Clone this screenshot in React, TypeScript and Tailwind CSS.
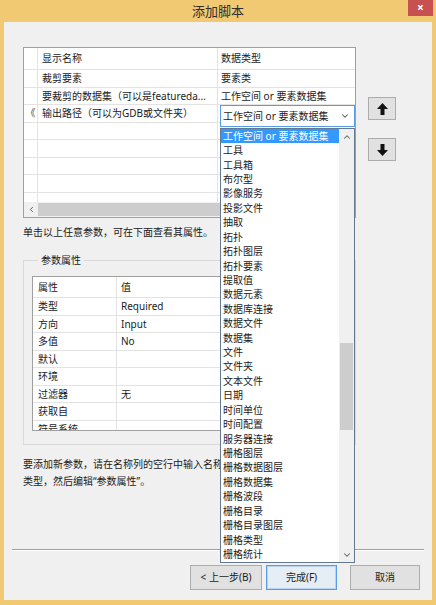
import { ChevronDown, ChevronLeft, ChevronUp } from "lucide-react";

const TYPES = [
  "工作空间 or 要素数据集",
  "工具",
  "工具箱",
  "布尔型",
  "影像服务",
  "投影文件",
  "抽取",
  "拓扑",
  "拓扑图层",
  "拓扑要素",
  "提取值",
  "数据元素",
  "数据库连接",
  "数据文件",
  "数据集",
  "文件",
  "文件夹",
  "文本文件",
  "日期",
  "时间单位",
  "时间配置",
  "服务器连接",
  "栅格图层",
  "栅格数据图层",
  "栅格数据集",
  "栅格波段",
  "栅格目录",
  "栅格目录图层",
  "栅格类型",
  "栅格统计",
];

const PARAMS = [
  { name: "裁剪要素", type: "要素类", mark: false },
  { name: "要裁剪的数据集（可以是featureda...", type: "工作空间 or 要素数据集", mark: false },
  { name: "输出路径（可以为GDB或文件夹）", type: "", mark: true },
];

const PROPS: [string, string][] = [
  ["类型", "Required"],
  ["方向", "Input"],
  ["多值", "No"],
  ["默认", ""],
  ["环境", ""],
  ["过滤器", "无"],
  ["获取自", ""],
  ["符号系统", ""],
];

export default function App() {
  return (
    <div className="relative flex h-[605px] w-[436px] flex-col bg-[#f1c972] font-['Noto_Sans','Noto_Sans_CJK_SC',sans-serif] text-[10px] text-[#1b1b1b]">
      {/* 标题栏 */}
      <div className="grid h-[22px] shrink-0 grid-cols-[1fr_auto_1fr] items-start">
        <div />
        <div className="pt-[2px] text-[13px] leading-[18px] text-[#2e2e2e]">添加脚本</div>
        <div className="flex justify-end pr-[3px]">
          <div className="flex h-[16px] w-[25px] items-center justify-center bg-[#c75050] text-[12px] font-bold leading-none text-white">
            ×
          </div>
        </div>
      </div>

      {/* 客户区 */}
      <div className="mx-[4px] mb-[5px] flex flex-1 flex-col bg-[#f0f0f0]">
        <div className="pl-[19px] pt-[25px]">
          <div className="flex">
            <ParamGrid />
            <div className="ml-[12px] flex flex-col gap-[18px] pt-[50px]">
              <ArrowButton dir="up" />
              <ArrowButton dir="down" />
            </div>
          </div>

          <div className="mt-[6px] h-[17px] leading-[17px]">单击以上任意参数，可在下面查看其属性。</div>

          <fieldset className="mt-[11px] w-[333px] border border-[#d9d9d9] pb-[13px] pl-[8px] pt-[7px]">
            <legend className="ml-[6px] px-[3px] leading-[17px]">参数属性</legend>
            <PropGrid />
          </fieldset>

          <div className="mt-[11px] whitespace-nowrap leading-[17px]">
            <div>要添加新参数，请在名称列的空行中输入名称，并在右侧选择数据</div>
            <div>类型，然后编辑“参数属性”。</div>
          </div>
        </div>

        <div className="mt-auto">
          <div className="mx-[8px] h-[2px] border-b border-t border-b-white border-t-[#a0a0a0]" />
          <div className="mt-[14px] flex justify-end pb-[10px] pr-[12px]">
            <button className="flex h-[25px] w-[72px] items-center justify-center border border-[#adadad] bg-[#e1e1e1]">
              &lt; 上一步(B)
            </button>
            <button className="ml-[4px] flex h-[25px] w-[71px] items-center justify-center border border-[#569de5] bg-[#e5edf5] shadow-[inset_0_0_0_1px_#b8d4f2]">
              完成(F)
            </button>
            <button className="ml-[13px] flex h-[25px] w-[70px] items-center justify-center border border-[#adadad] bg-[#e1e1e1]">
              取消
            </button>
          </div>
        </div>
      </div>

      {/* 数据类型下拉列表 */}
      <div className="absolute left-[220px] top-[105px] w-[135px]">
        <div className="flex h-[22px] items-center justify-between border border-[#569de5] bg-white pl-[2px] pr-[4px]">
          <span>工作空间 or 要素数据集</span>
          <ChevronDown size={10} strokeWidth={2.5} className="text-[#5a5a5a]" />
        </div>
        <div className="mt-[1px] flex h-[435px] border border-[#64798f] bg-white">
          <div className="flex-1">
            {TYPES.map((t, i) => (
              <div
                key={t}
                className={
                  i === 0
                    ? "flex h-[14.43px] items-center bg-[#3399ff] pl-[2px] text-white"
                    : "flex h-[14.43px] items-center pl-[2px]"
                }
              >
                {t}
              </div>
            ))}
          </div>
          <div className="flex w-[15px] flex-col bg-[#f0f0f0]">
            <div className="flex h-[15px] items-center justify-center">
              <ChevronUp size={10} strokeWidth={2.5} className="text-[#606060]" />
            </div>
            <div className="h-[199px]" />
            <div className="mx-[1px] h-[87px] bg-[#cdcdcd]" />
            <div className="flex-1" />
            <div className="flex h-[15px] items-center justify-center">
              <ChevronDown size={10} strokeWidth={2.5} className="text-[#606060]" />
            </div>
          </div>
        </div>
      </div>
    </div>
  );
}

function ParamGrid() {
  return (
    <div className="flex h-[171px] w-[333px] flex-col overflow-hidden border border-[#a0a0a0] bg-white">
      <div className="flex h-[22px] shrink-0 border-b border-[#e3e3e3] leading-[21px]">
        <div className="w-[14px] border-r border-[#e3e3e3]" />
        <div className="w-[180px] border-r border-[#e3e3e3] pl-[4px]">显示名称</div>
        <div className="flex-1 pl-[3px]">数据类型</div>
      </div>
      {PARAMS.map((p) => (
        <GridRow key={p.name} name={p.name} type={p.type} mark={p.mark} />
      ))}
      <div className="flex-1 overflow-hidden">
        {[0, 1, 2, 3, 4].map((i) => (
          <GridRow key={i} name="" type="" mark={false} />
        ))}
      </div>
      <div className="flex h-[15px] shrink-0 bg-[#f0f0f0]">
        <div className="flex w-[14px] items-center justify-center">
          <ChevronLeft size={9} strokeWidth={2.5} className="text-[#606060]" />
        </div>
        <div className="my-[1px] mr-[90px] flex-1 bg-[#cdcdcd]" />
      </div>
    </div>
  );
}

function GridRow({ name, type, mark }: { name: string; type: string; mark: boolean }) {
  return (
    <div className="flex h-[17.5px] shrink-0 border-b border-[#e3e3e3] leading-[16.5px]">
      <div className="flex w-[14px] items-center justify-center border-r border-[#e3e3e3] text-[10px] text-[#444]">
        {mark ? "《" : ""}
      </div>
      <div className="w-[180px] truncate border-r border-[#e3e3e3] pl-[4px]">{name}</div>
      <div className="flex-1 truncate pl-[3px]">{type}</div>
    </div>
  );
}

function PropGrid() {
  return (
    <div className="h-[155px] w-[318px] overflow-hidden border border-[#a0a0a0] bg-white">
      <div className="flex h-[21px] border-b border-[#e3e3e3] leading-[20px]">
        <div className="w-[84px] border-r border-[#e3e3e3] pl-[5px]">属性</div>
        <div className="flex-1 pl-[4px]">值</div>
      </div>
      {PROPS.map(([k, v]) => (
        <div key={k} className="flex h-[17.5px] border-b border-[#e3e3e3] leading-[16.5px]">
          <div className="w-[84px] border-r border-[#e3e3e3] pl-[5px]">{k}</div>
          <div className="flex-1 pl-[4px]">{v}</div>
        </div>
      ))}
    </div>
  );
}

function ArrowButton({ dir }: { dir: "up" | "down" }) {
  return (
    <div className="flex h-[23px] w-[28px] items-center justify-center border border-[#acacac] bg-[#e1e1e1]">
      <svg width="11" height="12" viewBox="0 0 11 12" className={dir === "down" ? "rotate-180" : ""}>
        <polygon points="5.5,0 11,6 7.5,6 7.5,12 3.5,12 3.5,6 0,6" fill="#111" />
      </svg>
    </div>
  );
}
